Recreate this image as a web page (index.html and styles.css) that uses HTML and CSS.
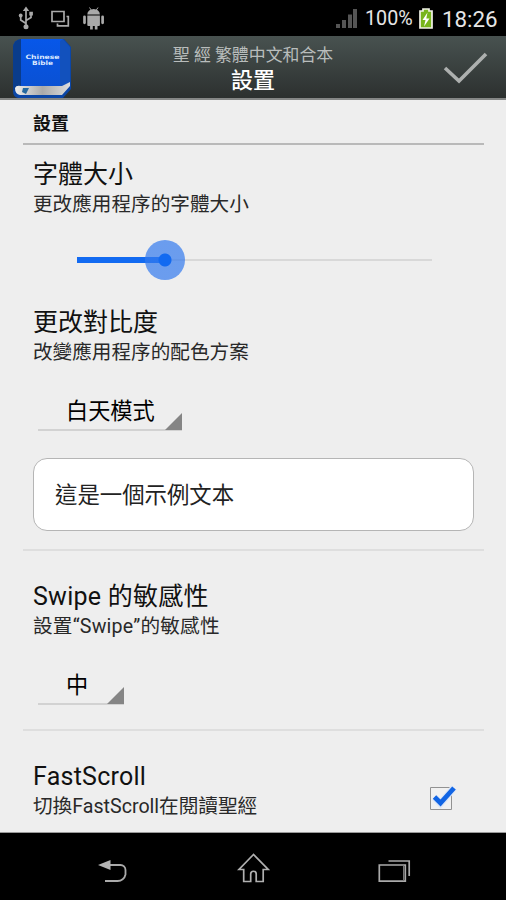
FILE: index.html
```html
<!DOCTYPE html>
<html lang="zh-Hant">
<head>
<meta charset="utf-8">
<title>設置</title>
<link rel="stylesheet" href="styles.css">
</head>
<body>
<div class="phone">
  <div class="status">
    <svg class="status-left" width="100" height="36" viewBox="0 0 100 36" fill="none" stroke="#a9a9a9" stroke-width="1.700">
      <path d="M26 9v18M26 23.500l-5.300-3.500v-4M26 20.500l5-3v-3"/>
      <path d="M26 6.500l-3.200 4.500h6.400z" fill="#a9a9a9" stroke="none"/>
      <circle cx="26" cy="26.700" r="2.500" fill="#a9a9a9" stroke="none"/>
      <circle cx="20.700" cy="15.500" r="1.900" fill="#a9a9a9" stroke="none"/>
      <path d="M29.300 11.800h3.600v3.600h-3.600z" fill="#a9a9a9" stroke="none"/>
      <path d="M52 11.500h12v10H52zM66.500 16.500h1.800v9.300H57.500v-2.300"/>
      <path d="M87.300 14.500a6 5.300 0 0 1 12.600 0z" fill="#a9a9a9" stroke="none"/>
      <path d="M89.500 7.500l2 3M98 7.500l-2 3" stroke-width="1"/>
      <path d="M87.300 15.500h12.600v9.500q0 1-1 1H97.500v3.500h-2.700V26h-2v3.500h-2.700V26h-1.800q-1 0-1-1z" fill="#a9a9a9" stroke="none"/>
      <path d="M84.500 16.800v6" stroke-width="2.700" stroke-linecap="round"/>
    </svg>
    <svg class="android-arm" width="8" height="36" viewBox="0 0 8 36"><path d="M2.600 16.800v6" stroke="#a9a9a9" stroke-width="2.700" stroke-linecap="round"/></svg>
    <svg class="signal" width="24" height="36" viewBox="0 0 24 36" fill="#555"><path d="M1 24h4v4H1zM7 20h4v8H7zM13 14.500h4V28h-4zM18 9h4v19h-4z"/></svg>
    <span class="percent">100%</span>
    <svg class="battery" width="16" height="36" viewBox="0 0 16 36"><path d="M5 9h6v2h3v17H2V11h3z" fill="#78b51c" stroke="#f2f2e8" stroke-width="1.700"/><path d="M9.500 12.500L4.500 20h3L6 26.500l5.500-8H8.300z" fill="#fff"/></svg>
    <span class="clock">18:26</span>
  </div>

  <header class="header">
    <svg class="book" width="60" height="62" viewBox="0 0 60 62">
      <defs><linearGradient id="cover" x2="0" y2="1"><stop stop-color="#0757e9"/><stop offset="1" stop-color="#0a51d4"/></linearGradient>
      <linearGradient id="pages" x2="1" y2="0"><stop stop-color="#eee"/><stop offset=".5" stop-color="#aaa"/><stop offset="1" stop-color="#ddd"/></linearGradient></defs>
      <path d="M9 2h43l7 8v42l-8 9H6q-5-1-5-7V9q1-6 8-7z" fill="#0b46a6"/>
      <path d="M9 2h42l-3 47H9z" fill="url(#cover)"/>
      <path d="M9 2v47l-8 5V10q1-7 8-8z" fill="#0a3c8b"/>
      <path d="M51 2l7 8v39l-10 2V4z" fill="#1251bd"/>
      <path d="M3 51q1-3 6-2h41l8-4v4l-8 9H8q-5-1-5-7z" fill="url(#pages)"/>
      <path d="M11 51h6l-3 6-4-2z" fill="#2669a0"/>
      <text x="30.500" y="21.500" textLength="34" lengthAdjust="spacingAndGlyphs">Chinese</text>
      <text x="30.500" y="27.500" textLength="21" lengthAdjust="spacingAndGlyphs">Bible</text>
    </svg>
    <div class="titles">
      <div class="app-name">聖 經 繁體中文和合本</div>
      <div class="page-name">設置</div>
    </div>
    <svg class="accept" width="48" height="36" viewBox="0 0 48 36"><path d="M3 18l14 13L44 4" fill="none" stroke="#adb0af" stroke-width="3.600"/></svg>
  </header>

  <main class="content">
    <h2 class="section">設置</h2>

    <section class="setting">
      <div class="title">字體大小</div>
      <div class="summary">更改應用程序的字體大小</div>
      <div class="slider"><div class="fill"></div><div class="knob"></div></div>
      <div class="title">更改對比度</div>
      <div class="summary">改變應用程序的配色方案</div>
      <div class="spinner wide">白天模式</div>
      <div class="sample">這是一個示例文本</div>
    </section>

    <section class="setting divided">
      <div class="title latin">Swipe 的敏感性</div>
      <div class="summary latin">設置“Swipe”的敏感性</div>
      <div class="spinner">中</div>
    </section>

    <section class="setting divided row">
      <div>
        <div class="title latin">FastScroll</div>
        <div class="summary">切換FastScroll在閱讀聖經</div>
      </div>
      <svg class="check" width="30" height="30" viewBox="0 0 30 30"><path d="M2.500 4.500h21v22h-21z" fill="#f1f1f1" stroke="#929292"/><path d="M6.500 14.500l6 6L26 4.500" fill="none" stroke="#dbe5f6" stroke-width="7"/><path d="M6.500 14l6 6L26 5" fill="none" stroke="#1265e4" stroke-width="4.800"/></svg>
    </section>
  </main>

  <nav class="nav">
    <svg width="34" height="32" viewBox="0 0 34 32"><path d="M7 9.500h16.500a5 5 0 0 1 5 5v4.500a8 8 0 0 1-8 6.500H8" transform="translate(0 -.5)" fill="none" stroke="#aaa" stroke-width="1.800"/><path d="M1 9l12.500-5v10z" fill="#b5b5b5"/></svg>
    <svg width="34" height="32" viewBox="0 0 34 32"><path d="M16.500 -1.500L2 13.500h4.700v12h7V18a2.700 2.700 0 0 1 5.500 0v7.500h7v-12h5z" fill="none" stroke="#b0b0b0" stroke-width="1.700"/></svg>
    <svg width="34" height="32" viewBox="0 0 34 32"><path d="M2.300 9h26v16.200h-26zM11.500 5h20.700V20" fill="none" stroke="#aaa" stroke-width="1.700"/><path d="M26.500 9.500v15.500" stroke="#777"/></svg>
  </nav>
</div>
</body>
</html>
```
FILE: styles.css
```css
* { box-sizing: border-box; }
body {
  margin: 0;
  font-family: Roboto, "Noto Sans CJK TC", sans-serif;
  color: #111;
  background: #000;
}
svg { flex: none; overflow: visible; display: block; }
.phone { width: 506px; height: 900px; display: flex; flex-direction: column; overflow: hidden; }

.status { height: 36px; display: flex; align-items: center; background: #000; color: #e6e6e6; white-space: nowrap; }
.android-arm { margin-right: 227px; }
.signal { margin-right: 6px; }
.percent { width: 47px; font-size: 19.700px; line-height: 36px; margin-top: 2px; }
.battery { margin-left: 6px; }
.clock { margin-left: 8px; font-size: 22.300px; line-height: 36px; margin-top: 1px; }

.header {
  height: 64px;
  display: flex;
  align-items: flex-start;
  background: linear-gradient(#485250, #2c302f);
  border-bottom: 2px solid #858786;
}
.book { margin: 1px 0 0 12px; }
.book text { font: bold 6px "DejaVu Sans", sans-serif; fill: #dbe8ff; text-anchor: middle; }
.titles { flex: 1; margin-left: -8px; text-align: center; white-space: nowrap; }
.app-name { font-size: 16.900px; line-height: 24px; margin-top: 7px; color: #b9bdbc; }
.page-name { font-size: 22px; line-height: 28px; font-weight: 500; color: #fff; }
.accept { margin: 14px 16px 0 0; }

.content { height: 733px; padding: 0 22px 0 23px; background: #eee; border-bottom: 1px solid #999; }
.section { height: 45px; margin: 0; padding-left: 10px; font-size: 18px; line-height: 48px; font-weight: 700; border-bottom: 2px solid #b9b9b9; }
.setting { padding: 15px 10px 0; }
.title { font-size: 25px; line-height: 30px; }
.title.latin { letter-spacing: .25px; }
.summary { font-size: 19.640px; line-height: 30px; color: #292929; }
.summary.latin { letter-spacing: .2px; }
.slider { position: relative; width: 355px; height: 2px; margin: 39px 0 47px 44px; background: #d8d8d8; }
.fill { position: absolute; left: 0; top: -2px; width: 89px; height: 6px; background: #126af1; }
.knob { position: absolute; left: 68px; top: -19px; width: 40px; height: 40px; border-radius: 50%; background: radial-gradient(circle, #126af1 6px, rgba(51, 122, 238, .7) 7px); }
.spinner { position: relative; width: 86px; height: 40px; margin: 23px 0 0 5px; padding-left: 28px; border-bottom: 2px solid #d2d2d2; font-size: 22.200px; line-height: 41px; color: #000; }
.spinner.wide { width: 144px; }
.spinner::after { content: ""; position: absolute; right: 0; bottom: -1px; width: 17px; height: 17px; background: #858585; clip-path: polygon(100% 0, 100% 100%, 0 100%); }
.sample { width: 441px; height: 73px; margin: 27px 0 18px; padding-left: 21px; border: 1.500px solid #b5b5b5; border-radius: 14px; background: #fff; font-size: 22.400px; line-height: 73px; color: #222; }
.divided { border-top: 2px solid #dedede; padding-top: 31px; }
.divided .spinner { margin-bottom: 24px; }
.row { display: flex; justify-content: space-between; }
.check { margin: 21px 16px 0 0; }

.nav { height: 67px; display: grid; grid-template-columns: repeat(3, 34px); column-gap: 106px; padding: 23px 0 0 97px; background: #000; }
```
